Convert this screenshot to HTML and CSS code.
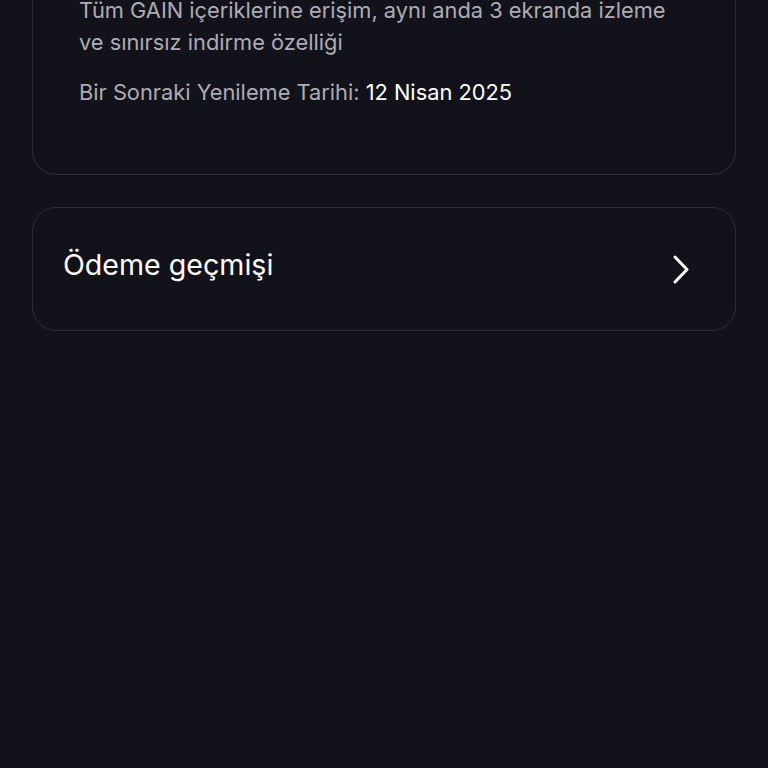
FILE: index.html
```html
<!DOCTYPE html>
<html lang="tr">
<head>
  <meta charset="UTF-8">
  <meta name="viewport" content="width=device-width, initial-scale=1.0">
  <title>Abonelik</title>
  <link rel="stylesheet" href="styles.css">
</head>
<body>

  <div class="page">
    <!-- Plan card (scrolled, top is off-screen) -->
    <section class="plan-card">
      <p class="plan-desc">
        Tüm GAIN içeriklerine erişim, aynı anda 3 ekranda izleme<br>
        ve sınırsız indirme özelliği
      </p>
      <p class="plan-renew">
        Bir Sonraki Yenileme Tarihi: <span class="renew-date">12 Nisan 2025</span>
      </p>
    </section>

    <!-- Payment history link -->
    <a class="link-card" href="#">
      <span class="link-title">Ödeme geçmişi</span>
      <svg class="chevron" width="24" height="32" viewBox="0 0 24 32" fill="none">
        <path d="M6 4 L18 16.5 L6 29" stroke="#fff" stroke-width="3" stroke-linecap="round" stroke-linejoin="round"/>
      </svg>
    </a>
  </div>

</body>
</html>
```

FILE: styles.css
```css
/* Basic Styling */
body {
  background-color: #12121a;
  margin: 0;
  font-family: 'Inter', 'Noto Sans', sans-serif;
  color: #fff;
  height: 100vh;
  overflow: hidden;
}

.page {
  display: flex;
  flex-direction: column;
  gap: 32px;
  padding: 0 32px;
}

/* Plan card */
.plan-card {
  border: 1px solid #2d2d36;
  border-top: none;
  border-radius: 0 0 24px 24px;
  padding: 0 46px 66px;
  margin-top: -6px;
}

.plan-desc {
  margin: 0;
  font-size: 21.8px;
  line-height: 32px;
  color: #acacb4;
}

.plan-renew {
  margin: 18px 0 0;
  font-size: 21.8px;
  line-height: 32px;
  color: #acacb4;
}

.renew-date {
  color: #fff;
}

/* Link card */
.link-card {
  display: flex;
  align-items: center;
  justify-content: space-between;
  height: 122px;
  padding: 0 42px 0 30px;
  border: 1px solid #2d2d36;
  border-radius: 24px;
  text-decoration: none;
  color: #fff;
}

.link-title {
  font-size: 28.6px;
  margin-top: -10px;
}

.chevron {
  display: block;
}
```
